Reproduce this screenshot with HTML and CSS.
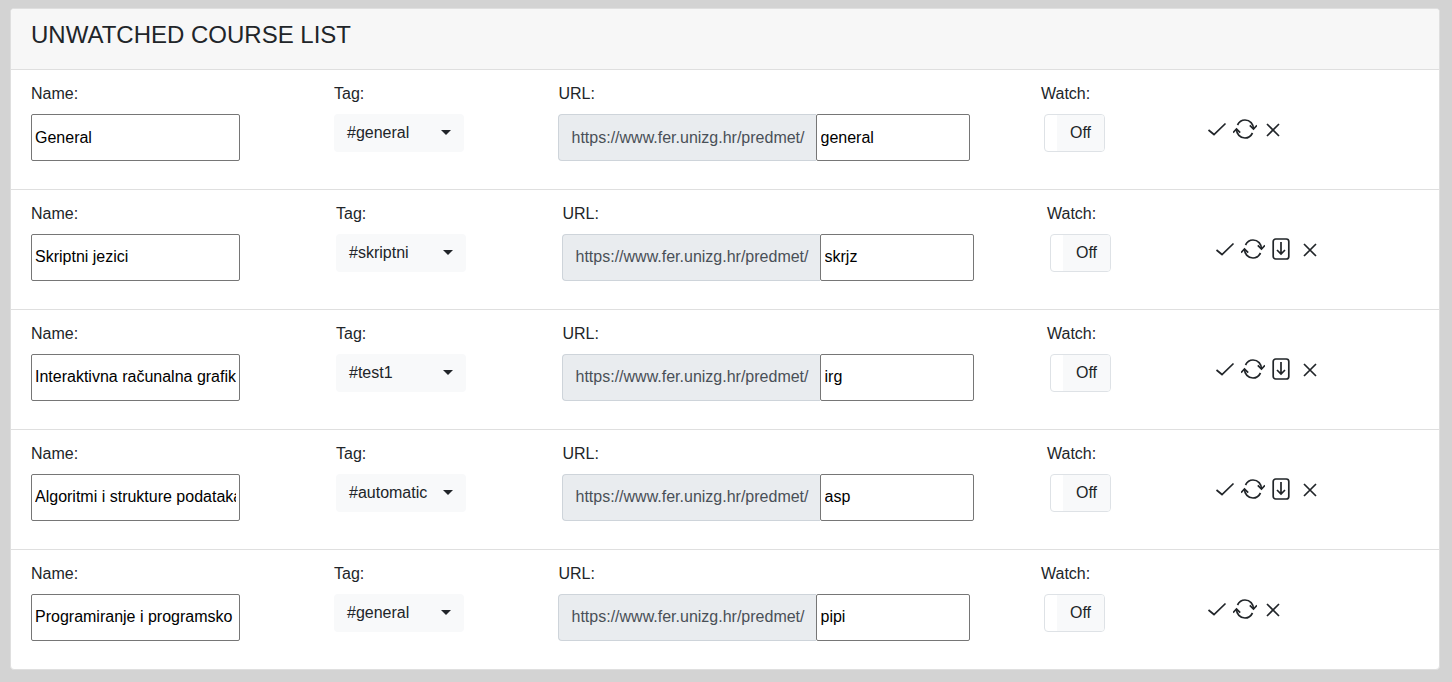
FILE: index.html
```html
<!DOCTYPE html>
<html lang="en">
  <head>
    <meta charset="UTF-8" />
    <title>Unwatched course list</title>
    <link rel="stylesheet" href="styles.css">
  </head>
  <body>
    <svg class="sprites" width="0" height="0">
      <symbol id="i-check" viewBox="0 0 20 14">
        <path d="M1.5 8 L7 12.5 L18.5 1.5" />
      </symbol>
      <symbol id="i-sync" viewBox="0 0 24 22">
        <path d="M4.5 7 C6 4 8.8 2 12 2 C17 2 20.5 6 20.5 11" />
        <path d="M19.5 15 C18 18 15.2 20 12 20 C7 20 3.5 16 3.5 11" />
        <path d="M16.8 7.4 L20.5 11 L24 7.4 M0 14.6 L3.5 11 L7.2 14.6" />
      </symbol>
      <symbol id="i-down" viewBox="0 0 18 22">
        <rect x="1.2" y="1" width="15.6" height="20" rx="2.5" />
        <path d="M9 4 V16 M5 12 L9 16 L13 12" />
      </symbol>
      <symbol id="i-close" viewBox="0 0 14 14">
        <path d="M1 1 L13 13 M13 1 L1 13" />
      </symbol>
    </svg>

    <div class="card">
      <div class="card-header">UNWATCHED COURSE LIST</div>

      <!-- row without the download icon -->
      <div class="course-row">
        <div><label>Name:</label><input class="name-input" type="text" value="General" /></div>
        <div><label>Tag:</label><button class="tag-select"><span>#general</span><i class="caret"></i></button></div>
        <div>
          <label>URL:</label>
          <div class="url-group"><span class="url-prefix">https://www.fer.unizg.hr/predmet/</span><input class="url-input" type="text" value="general" /></div>
        </div>
        <div><label>Watch:</label><div class="toggle"><span class="toggle-off">Off</span></div></div>
        <div class="actions">
          <svg class="icon check"><use href="#i-check" /></svg>
          <svg class="icon sync"><use href="#i-sync" /></svg>
          <svg class="icon close"><use href="#i-close" /></svg>
        </div>
      </div>

      <div class="course-row wide">
        <div><label>Name:</label><input class="name-input" type="text" value="Skriptni jezici" /></div>
        <div><label>Tag:</label><button class="tag-select"><span>#skriptni</span><i class="caret"></i></button></div>
        <div>
          <label>URL:</label>
          <div class="url-group"><span class="url-prefix">https://www.fer.unizg.hr/predmet/</span><input class="url-input" type="text" value="skrjz" /></div>
        </div>
        <div><label>Watch:</label><div class="toggle"><span class="toggle-off">Off</span></div></div>
        <div class="actions">
          <svg class="icon check"><use href="#i-check" /></svg>
          <svg class="icon sync"><use href="#i-sync" /></svg>
          <svg class="icon down"><use href="#i-down" /></svg>
          <svg class="icon close"><use href="#i-close" /></svg>
        </div>
      </div>

      <div class="course-row wide">
        <div><label>Name:</label><input class="name-input" type="text" value="Interaktivna računalna grafika" /></div>
        <div><label>Tag:</label><button class="tag-select"><span>#test1</span><i class="caret"></i></button></div>
        <div>
          <label>URL:</label>
          <div class="url-group"><span class="url-prefix">https://www.fer.unizg.hr/predmet/</span><input class="url-input" type="text" value="irg" /></div>
        </div>
        <div><label>Watch:</label><div class="toggle"><span class="toggle-off">Off</span></div></div>
        <div class="actions">
          <svg class="icon check"><use href="#i-check" /></svg>
          <svg class="icon sync"><use href="#i-sync" /></svg>
          <svg class="icon down"><use href="#i-down" /></svg>
          <svg class="icon close"><use href="#i-close" /></svg>
        </div>
      </div>

      <div class="course-row wide">
        <div><label>Name:</label><input class="name-input" type="text" value="Algoritmi i strukture podataka" /></div>
        <div><label>Tag:</label><button class="tag-select"><span>#automatic</span><i class="caret"></i></button></div>
        <div>
          <label>URL:</label>
          <div class="url-group"><span class="url-prefix">https://www.fer.unizg.hr/predmet/</span><input class="url-input" type="text" value="asp" /></div>
        </div>
        <div><label>Watch:</label><div class="toggle"><span class="toggle-off">Off</span></div></div>
        <div class="actions">
          <svg class="icon check"><use href="#i-check" /></svg>
          <svg class="icon sync"><use href="#i-sync" /></svg>
          <svg class="icon down"><use href="#i-down" /></svg>
          <svg class="icon close"><use href="#i-close" /></svg>
        </div>
      </div>

      <div class="course-row">
        <div><label>Name:</label><input class="name-input" type="text" value="Programiranje i programsko inženjerstvo" /></div>
        <div><label>Tag:</label><button class="tag-select"><span>#general</span><i class="caret"></i></button></div>
        <div>
          <label>URL:</label>
          <div class="url-group"><span class="url-prefix">https://www.fer.unizg.hr/predmet/</span><input class="url-input" type="text" value="pipi" /></div>
        </div>
        <div><label>Watch:</label><div class="toggle"><span class="toggle-off">Off</span></div></div>
        <div class="actions">
          <svg class="icon check"><use href="#i-check" /></svg>
          <svg class="icon sync"><use href="#i-sync" /></svg>
          <svg class="icon close"><use href="#i-close" /></svg>
        </div>
      </div>
    </div>
  </body>
</html>
```

FILE: styles.css
```css
/* General Styling */
html,
body {
  height: 100%;
}
body {
  margin: 0;
  padding: 8px 12px 11px 10px;
  box-sizing: border-box;
  background-color: #d3d3d3;
  font-family: "Liberation Sans", Arial, sans-serif;
  font-size: 16px;
  line-height: 24px;
  color: #212529;
  overflow: hidden;
}
.sprites {
  position: absolute;
}

/* Card */
.card {
  background-color: #fff;
  border: 1px solid #dfdfdf;
  border-radius: 4px;
  height: 662px;
  box-sizing: border-box;
}
.card-header {
  height: 61px;
  box-sizing: border-box;
  padding: 12px 20px;
  font-size: 24px;
  line-height: 28px;
  background-color: #f7f7f7;
  border-bottom: 1px solid #dfdfdf;
  border-radius: 3px 3px 0 0;
}

/* Rows */
.course-row {
  display: grid;
  grid-template-columns: 303px 224.5px 482.5px 166px auto;
  height: 120px;
  box-sizing: border-box;
  padding: 12px 20px 0;
  border-bottom: 1px solid #dfdfdf;
}
.course-row:last-child {
  height: 119px;
  border-bottom: none;
}
.course-row.wide {
  grid-template-columns: 305px 226.5px 484.5px 168px auto;
}
label {
  display: block;
  margin-bottom: 8px;
}

/* Inputs */
input {
  font-family: inherit;
  font-size: 16px;
  color: #000;
  background-color: #fff;
  border: 1px solid #767676;
  border-radius: 2px;
  padding: 0 3px 2px;
  height: 47px;
  box-sizing: border-box;
  display: block;
}
.name-input {
  width: 209px;
}
.url-group {
  display: flex;
  margin-left: -0.5px;
}
.url-prefix {
  width: 258px;
  height: 47px;
  box-sizing: border-box;
  padding: 0 12px 2px 12.5px;
  display: flex;
  align-items: center;
  white-space: nowrap;
  color: #495057;
  background-color: #e9ecef;
  border: 1px solid #ced4da;
  border-right: none;
  border-radius: 4px 0 0 4px;
}
.url-input {
  width: 154px;
  padding-left: 3.5px;
}
/* first row text sits a pixel lower */
.card-header + .course-row input {
  padding-top: 1px;
  padding-bottom: 1px;
}
.card-header + .course-row .url-prefix {
  padding-bottom: 0;
}

/* Tag dropdown */
.tag-select {
  width: 130px;
  height: 38px;
  padding: 0 13px;
  display: flex;
  align-items: center;
  justify-content: space-between;
  font-family: inherit;
  font-size: 16px;
  color: #212529;
  background-color: #f8f9fa;
  border: none;
  border-radius: 4px;
}
.caret {
  width: 0;
  height: 0;
  margin-top: -1px;
  border-top: 5px solid #212529;
  border-left: 5px solid transparent;
  border-right: 5px solid transparent;
}

/* Watch toggle */
.toggle {
  margin-left: 3px;
  width: 61px;
  height: 38px;
  box-sizing: border-box;
  background-color: #fff;
  border: 1px solid #dee2e6;
  border-radius: 4px;
  padding-left: 12px;
  display: flex;
}
.toggle-off {
  flex: 1;
  text-align: center;
  line-height: 35px;
  background-color: #f8f9fa;
  border-radius: 0 3px 3px 0;
}

/* Action icons */
.actions {
  display: flex;
  align-items: flex-start;
  padding-top: 34px;
}
.icon {
  display: block;
  fill: none;
  stroke: #212529;
  stroke-width: 1.7;
}
.check {
  width: 20px;
  height: 14px;
  margin-top: 6px;
}
.sync {
  width: 24px;
  height: 22px;
  margin: 2px 0 0 6px;
}
.down {
  width: 18px;
  height: 22px;
  margin: 2px 0 0 7px;
}
.close {
  width: 14px;
  height: 14px;
  margin: 7px 0 0 9px;
}
.wide .close {
  margin-left: 13px;
}
```
